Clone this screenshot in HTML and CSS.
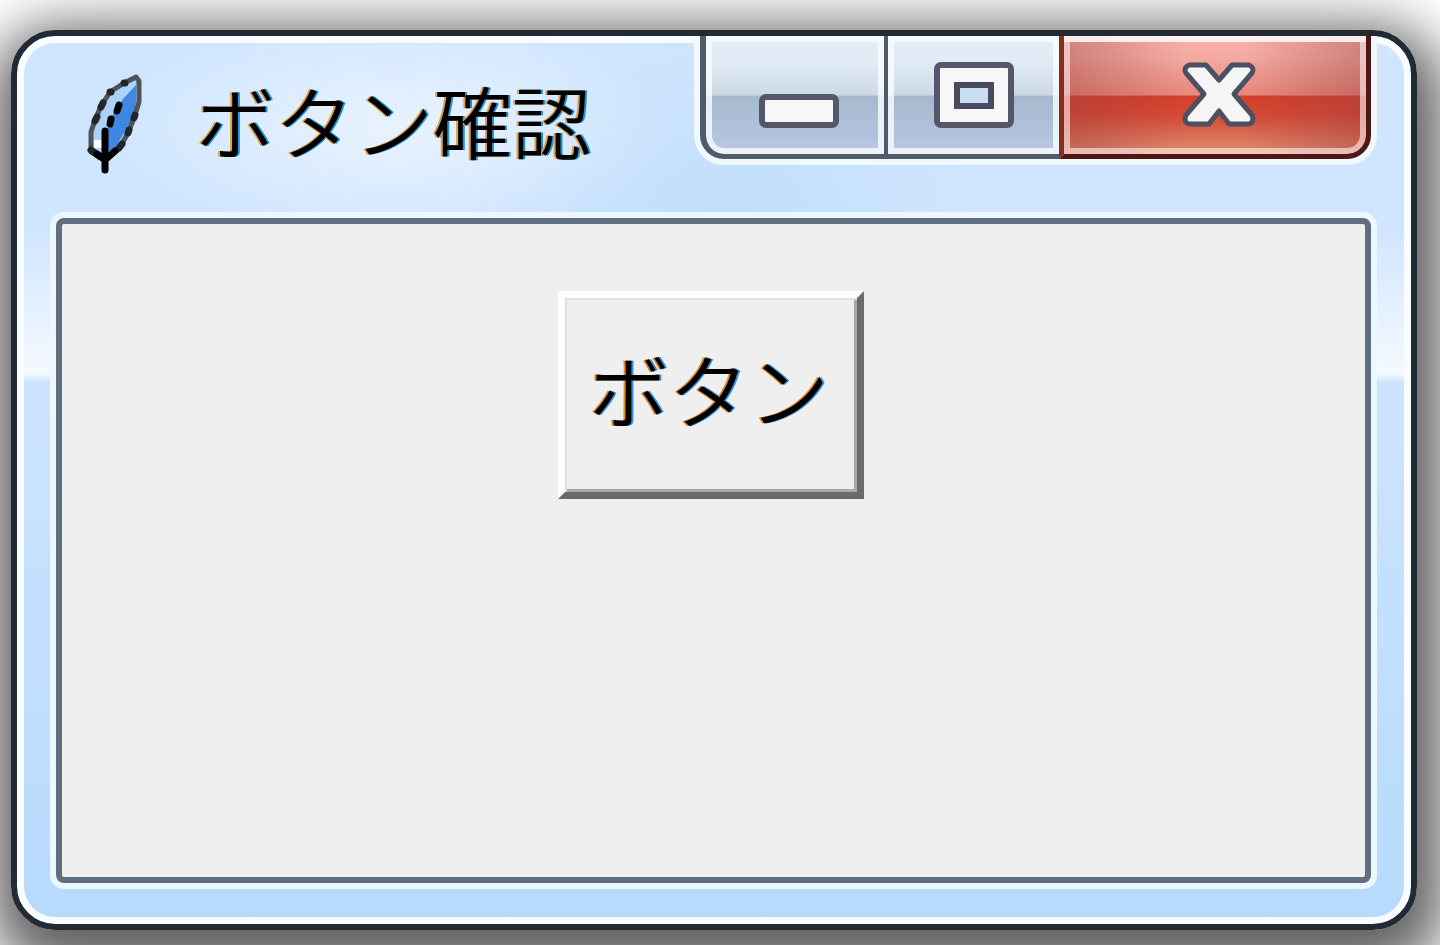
FILE: index.html
```html
<!DOCTYPE html>
<html lang="ja">
	<head>
		<meta charset="UTF-8">
		<title>ボタン確認</title>
		<link rel="stylesheet" href="styles.css">
	</head>
	<body>
		<div class="window">
			<div class="titlebar">
				<svg class="feather" viewBox="0 0 60 108" aria-hidden="true">
					<path d="M48 6L38 11L25 20L16 34L10 48L7 60V80L20 86L34 76L43 61L50 46L54 28V6Z" fill="#acd2fb"/>
					<path d="M51 13L38 27L29 40L22 57V80L30 76L39 61L48 45L51 30Z" fill="#3f87e3"/>
					<path d="M9 68h8v8H9z" fill="#fff"/>
					<path d="M51 5L39 11L25 20L16 34L10 48L6 60V80L20 88L34 77L43 61L49 46L54 30V9Z" fill="none" stroke="#4d5358" stroke-width="5" stroke-linejoin="round"/>
					<path d="M39 11h1M25 20h1M18 31L16 35M12 45L10 49M6 78L14 84M34 76L37 72M43 61L44 58M49 46L50 43" fill="none" stroke="#22262a" stroke-width="7" stroke-linecap="round"/>
					<path d="M34 33L32 39M26 47L25 52M20 59V98M12 82L20 88L30 79" fill="none" stroke="#000" stroke-width="7" stroke-linecap="round"/>
				</svg>
				<h1 class="title">ボタン確認</h1>
				<div class="controls">
					<button type="button" class="ctrl min" aria-label="最小化">
						<svg viewBox="0 0 80 66" aria-hidden="true">
							<rect x="3" y="35" width="74" height="28" rx="4" fill="#f7f7f7" stroke="#54566a" stroke-width="6"/>
						</svg>
					</button>
					<button type="button" class="ctrl max" aria-label="最大化">
						<svg viewBox="0 0 80 66" aria-hidden="true">
							<rect x="3" y="3" width="74" height="60" rx="4" fill="#f7f7f7" stroke="#54566a" stroke-width="6"/>
							<rect x="23" y="23" width="34" height="21" fill="#c8deef" stroke="#484b60" stroke-width="6"/>
						</svg>
					</button>
					<button type="button" class="ctrl close" aria-label="閉じる">
						<svg viewBox="0 0 80 66" aria-hidden="true">
							<path d="M10 3H27L40 18L53 3H70Q76 6 73 11L55 32L73 53Q76 60 70 62H50L40 49L30 62H10Q4 60 7 53L25 32L7 11Q4 6 10 3Z" fill="#f5f5f5" stroke="#4b5063" stroke-width="5" stroke-linejoin="round"/>
						</svg>
					</button>
				</div>
			</div>
			<div class="client">
				<button type="button" class="tk_button">ボタン</button>
			</div>
		</div>
	</body>
</html>
```
FILE: styles.css
```css
*{
	box-sizing: border-box;
}
body{
	margin: 0;
	min-height: 100vh;
	padding: 30px 23px 15px 11px;
	display: flex;
	background: #fff;
	font-family: "Noto Sans CJK JP", sans-serif;
	color: #000;
}
.window{
	flex: 1;
	display: flex;
	flex-direction: column;
	border: 6px solid #222a33;
	border-radius: 44px;
	background: linear-gradient(#d0e6ff 0%, #d0e6ff 22%, #f5f9ff 38%, #cde4ff 39%, #b7dafd 100%);
	box-shadow: inset 0 0 0 7px #fafdff, 4px 20px 56px 24px rgba(0,0,0,0.62);
}
.titlebar{
	display: flex;
	align-items: flex-start;
	height: 182px;
	padding: 0 40px 0 68px;
	background: radial-gradient(ellipse 280px 110px at 27% 50%, rgba(240,246,254,0.8), rgba(240,246,254,0) 100%), radial-gradient(ellipse 260px 200px at 51% 100%, rgba(185,217,248,0.6), rgba(185,217,248,0) 100%);
}
.feather{
	width: 60px;
	height: 108px;
	margin-top: 36px;
}
.title{
	flex: 1;
	margin: 24px 0 0 51px;
	font-size: 79px;
	line-height: 120px;
	font-weight: 350;
	white-space: nowrap;
	text-shadow: -2px 0 #e0a040, 2px 0 #2090d8;
}
/* 最小化・最大化・閉じる */
.controls{
	display: flex;
	height: 123px;
	border-radius: 0 0 24px 24px;
	box-shadow: 0 0 0 6px #f0f9ff;
	clip-path: inset(0 -6px -6px -6px);
}
.ctrl{
	display: flex;
	justify-content: center;
	align-items: flex-start;
	margin: 0;
	padding: 26px 0 0;
	border: 0 solid #4f5b68;
	border-bottom-width: 5px;
	background: linear-gradient(#e3eef9 0%, #dfeaf5 25%, #ccd9e5 50%, #a4b8cd 51%, #b8c9e4 100%);
	box-shadow: inset 0 0 0 6px rgba(250,253,255,0.8);
}
.ctrl svg{
	width: 80px;
	height: 66px;
}
.min{
	width: 188px;
	padding-left: 8px;
	border-left-width: 6px;
	border-right-width: 4px;
	border-radius: 0 0 0 24px;
}
.max{
	width: 171px;
}
.close{
	width: 312px;
	padding-left: 8px;
	border-color: #4d1813;
	border-left: 5px solid #882c1c;
	border-right-width: 5px;
	border-radius: 0 0 24px 0;
	background: linear-gradient(90deg, rgba(150,60,60,0.4), rgba(150,60,60,0) 40%, rgba(150,60,60,0) 60%, rgba(150,60,60,0.4)), linear-gradient(#f6b3ad 0%, #f3a8a0 20%, #e98679 50%, #d43f2b 51%, #d54b35 68%, #df8e72 100%);
	box-shadow: inset 0 0 0 6px rgba(255,240,238,0.6), inset 0 6px rgba(255,255,255,0.8);
}
.client{
	flex: 1;
	margin: 0 40px 41px 39px;
	padding: 67px 5px 0 0;
	border: 6px solid #5f6f7f;
	border-radius: 8px;
	background: #efefef;
	box-shadow: 0 0 0 6px #edf7ff;
	text-align: center;
}
.tk_button{
	margin: 0;
	padding: 28px 28px 44px 24px;
	border: 7px solid;
	border-color: #fff #6b6b6b #6b6b6b #fff;
	background: #efefef;
	box-shadow: inset 2px 2px #e0e0e0, inset -3px -3px #a8a8a8;
	font-family: inherit;
	font-size: 80px;
	font-weight: 350;
	line-height: 122px;
	color: #000;
	text-shadow: -2px 0 #e08a20, 2px 0 #3090e0;
}
```
